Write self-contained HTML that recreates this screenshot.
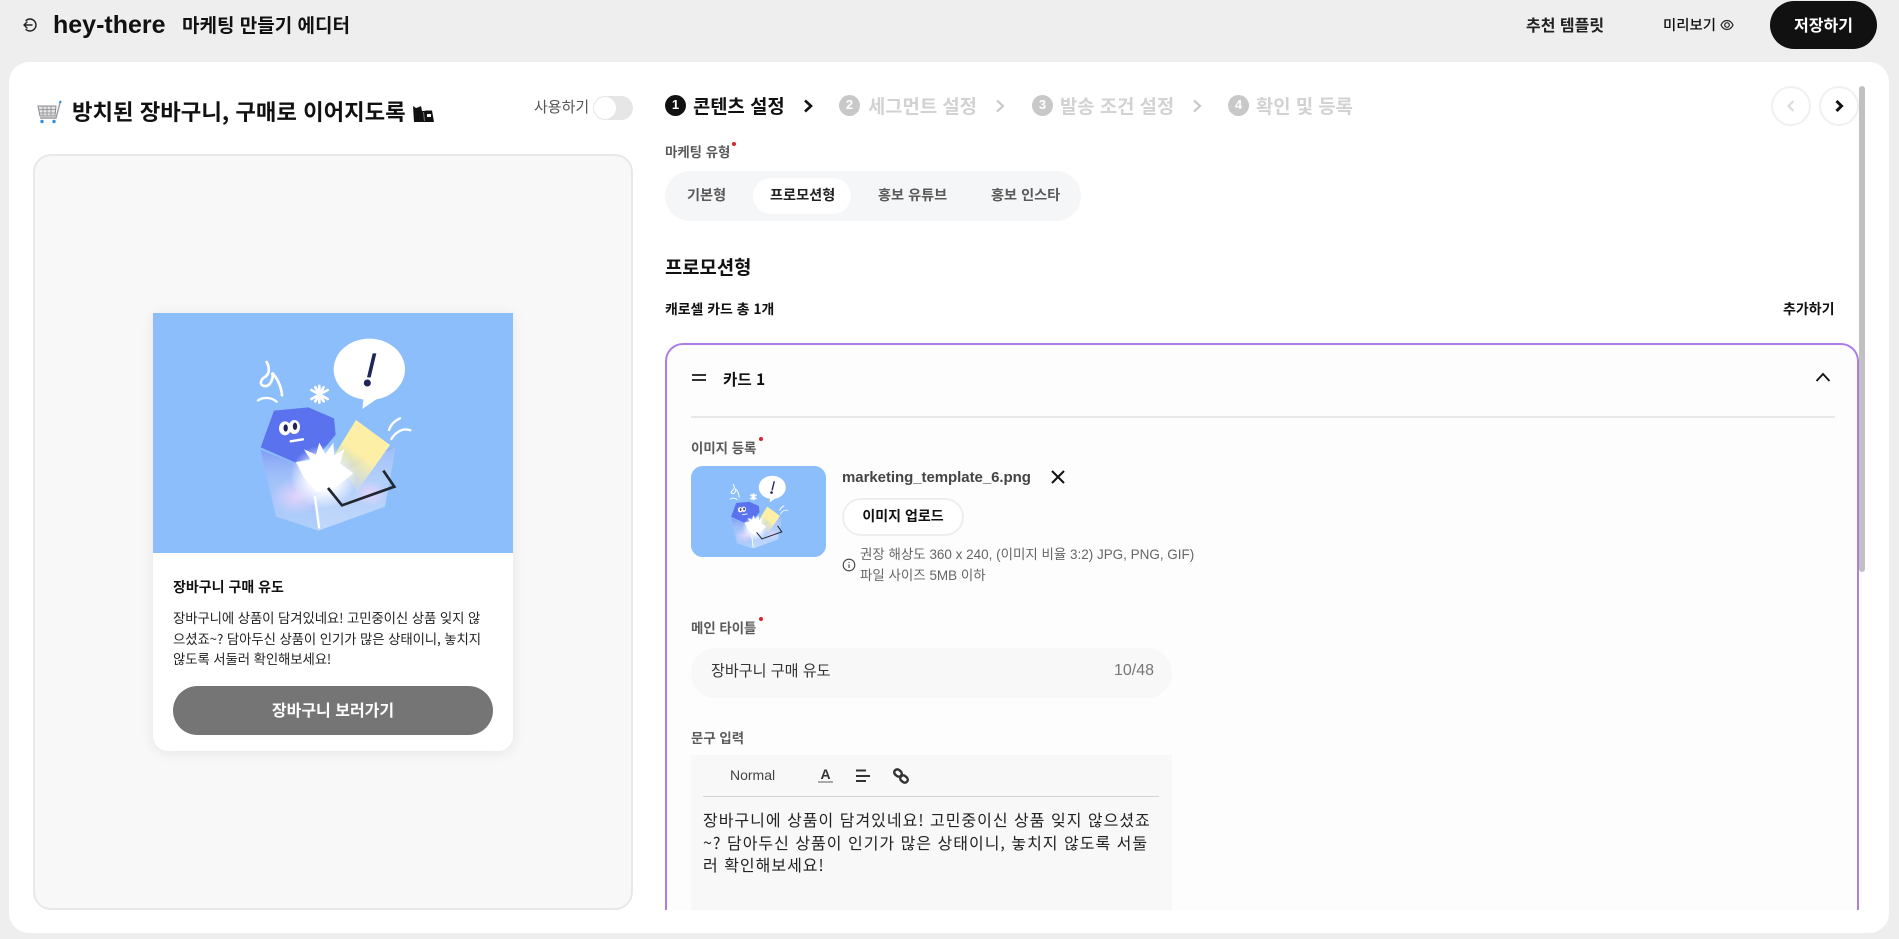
<!DOCTYPE html>
<html lang="ko">
<head>
<meta charset="utf-8">
<title>hey-there 마케팅 만들기 에디터</title>
<style>
html,body{margin:0;padding:0;width:1899px;height:939px;overflow:hidden;background:#eeeeee}
body{font-family:"Liberation Sans","Noto Sans CJK KR",sans-serif;color:#111;position:relative}
.a{position:absolute}
.t{position:absolute;white-space:nowrap;line-height:24px;height:24px}
.k{font-family:"Noto Sans CJK KR","Liberation Sans",sans-serif}
.b{font-weight:700}
.m{font-weight:500}
.star{position:absolute;width:4px;height:4px;border-radius:50%;background:#e0202e}
.pv{letter-spacing:-.1px}
svg{display:block}
</style>
</head>
<body>
<svg style="position:absolute;left:0;top:0" width="0" height="0">
  <defs>
    <radialGradient id="g1" cx=".5" cy=".5" r=".5"><stop offset="0" stop-color="#fff"/><stop offset=".45" stop-color="#fff" stop-opacity=".95"/><stop offset="1" stop-color="#fff" stop-opacity="0"/></radialGradient>
    <radialGradient id="g2" cx=".5" cy=".5" r=".5"><stop offset="0" stop-color="#e2d4fb"/><stop offset="1" stop-color="#e2d4fb" stop-opacity="0"/></radialGradient>
    <linearGradient id="g3" x1="0" y1="0" x2="0" y2="1"><stop offset="0" stop-color="#6d7ff0" stop-opacity=".6"/><stop offset=".4" stop-color="#c9c8f6" stop-opacity=".35"/><stop offset="1" stop-color="#cfe1fb" stop-opacity=".55"/></linearGradient>
    <linearGradient id="g4" x1="1" y1="0" x2="0" y2="1"><stop offset="0" stop-color="#b7d5fb" stop-opacity=".6"/><stop offset="1" stop-color="#cfdffb" stop-opacity=".55"/></linearGradient>
    <linearGradient id="g5" x1=".75" y1="0" x2=".25" y2="1"><stop offset="0" stop-color="#fdf0a6"/><stop offset=".5" stop-color="#fdf0a6"/><stop offset="1" stop-color="#fdf0a6" stop-opacity="0"/></linearGradient>
    <symbol id="art" viewBox="39 39 1080 720" preserveAspectRatio="xMidYMid slice">
      <rect x="39" y="39" width="1080" height="720" fill="#8bbefb"/>
      <path d="M380 186C390 205 388 222 376 230C360 240 358 255 372 258C392 262 402 232 396 218C410 232 424 258 426 286" fill="none" stroke="#fff" stroke-width="8" stroke-linecap="round"/>
      <path d="M354 301C372 290 394 292 410 305" fill="none" stroke="#fff" stroke-width="7" stroke-linecap="round"/>
      <g stroke="#fff" stroke-width="8" stroke-linecap="round">
        <path d="M538 258V308M514 270L563 297M514 297L563 270M526 262L551 304M551 262L526 304"/>
      </g>
      <ellipse cx="688" cy="208" rx="107" ry="92" fill="#fff"/>
      <path d="M672 285L667 327L712 296Z" fill="#fff"/>
      <path d="M698 160H709L692 232H681Z" fill="#1f2559"/>
      <circle cx="682" cy="249" r="10.500" fill="#1f2559"/>
      <path d="M780 355C765 362 752 374 747 390" fill="none" stroke="#fff" stroke-width="7" stroke-linecap="round"/>
      <path d="M811 391C790 383 768 394 754 417" fill="none" stroke="#fff" stroke-width="7" stroke-linecap="round"/>
      <path d="M402 332L505 322L582 355L587 404L532 470L465 487L362 442Z" fill="#5b72ef"/>
      <ellipse cx="435" cy="385" rx="18" ry="21" fill="#fff"/>
      <ellipse cx="463" cy="381" rx="17" ry="21" fill="#fff"/>
      <ellipse cx="437" cy="384" rx="6.500" ry="11" fill="#1f2559"/>
      <ellipse cx="465" cy="379" rx="6.500" ry="11" fill="#1f2559"/>
      <path d="M452 424L489 418" stroke="#fff" stroke-width="7" stroke-linecap="round"/>
      <path d="M362 450L408 650L535 692L735 620L768 440L640 490L465 490Z" fill="url(#g3)"/>
      <path d="M768 440L735 620L535 692L530 590L640 500Z" fill="url(#g4)"/>
      <ellipse cx="470" cy="590" rx="78" ry="58" fill="url(#g2)"/>
      <ellipse cx="690" cy="580" rx="48" ry="40" fill="url(#g2)"/>
      <path d="M648 360L750 435L650 575L585 462Z" fill="url(#g5)"/>
      <ellipse cx="550" cy="530" rx="100" ry="95" fill="url(#g1)"/>
      <path d="M468 486L512 480L492 448L528 464L538 428L556 462L580 428L583 466L614 446L600 490L640 520L590 560L530 575L490 530Z" fill="#fff"/>
      <path d="M525 590L537 682" stroke="#fff" stroke-width="7" stroke-linecap="round"/>
      <path d="M564 564L606 616L763 560L730 512" fill="none" stroke="#22262f" stroke-width="8" stroke-linejoin="miter"/>
    </symbol>
  </defs>
</svg>

<!-- HEADER -->
<svg class="a" style="left:21px;top:16px" width="18" height="18" viewBox="0 0 18 18" fill="none" stroke="#222" stroke-width="1.400" stroke-linecap="round" stroke-linejoin="round"><path d="M3 9H11M6 6L3 9L6 12"/><path d="M5 4.500A6 6 0 1 1 5 13.500"/></svg>
<div class="t b" style="left:53px;top:13px;font-size:25px">hey-there</div>
<div class="t k b" style="left:182px;top:13px;font-size:19px">마케팅 만들기 에디터</div>
<div class="t k b" style="left:1526px;top:12px;font-size:16px;color:#222">추천 템플릿</div>
<div class="t k m" style="left:1663px;top:13px;font-size:14.400px">미리보기</div>
<svg class="a" style="left:1720px;top:18px" width="14" height="14" viewBox="0 0 14 14" fill="none" stroke="#222" stroke-width="1.200"><path d="M1 7C2.500 3.800 4.500 2.500 7 2.500S11.500 3.800 13 7C11.500 10.200 9.500 11.500 7 11.500S2.500 10.200 1 7Z"/><circle cx="7" cy="7" r="2.300"/></svg>
<div class="a" style="left:1770px;top:1px;width:107px;height:48px;border-radius:24px;background:#111"></div>
<div class="t k b" style="left:1770px;width:107px;text-align:center;top:12px;font-size:16px;color:#fff">저장하기</div>

<!-- PANEL -->
<div class="a" style="left:9px;top:62px;width:1880px;height:871px;border-radius:20px;background:#fff"></div>

<!-- LEFT TITLE -->
<svg class="a" style="left:36px;top:100px" width="26" height="25" viewBox="0 0 26 25" fill="none"><path d="M2 6H20L19 16H4Z" fill="#e4e4e6" stroke="#8a8a8e" stroke-width="1"/><path d="M7 6V16M11 6V16M15 6V16M2.500 9.500H20M3 13H19.500" stroke="#8a8a8e" stroke-width=".800"/><path d="M4 18H20L24 3" stroke="#9a9a9e" stroke-width="1.400"/><path d="M23.500 3L25 1" stroke="#2f8fd8" stroke-width="2"/><circle cx="6" cy="21.500" r="1.700" fill="#2f8fd8"/><circle cx="18" cy="21.500" r="1.700" fill="#2f8fd8"/></svg>
<div class="t k b" style="left:72px;top:99px;font-size:22.300px;color:#111">방치된 장바구니, 구매로 이어지도록</div>
<svg class="a" style="left:412px;top:105px" width="23" height="18" viewBox="0 0 23 18"><path d="M1 1L4 3L7 2L9 1L10 6H12L14 5.500H20L22 17H4L2 17Z" fill="#111"/><path d="M15 9H19V12H15Z" fill="#fff"/><path d="M11.500 7L12.500 16" stroke="#777" stroke-width="1"/></svg>
<div class="t k" style="left:534px;top:95px;font-size:15px;color:#555">사용하기</div>
<div class="a" style="left:593px;top:96px;width:40px;height:24px;border-radius:12px;background:#e6e6e6"></div>
<div class="a" style="left:594px;top:97px;width:22px;height:22px;border-radius:50%;background:#fff"></div>

<!-- PREVIEW -->
<div class="a" style="left:33px;top:154px;width:596px;height:752px;border:2px solid #e8e8e8;border-radius:18px;background:#f8f8f8"></div>
<div class="a" style="left:153px;top:313px;width:360px;height:438px;background:#fff;border-radius:0 0 15px 15px;box-shadow:0 2px 14px rgba(0,0,0,.08)"></div>
<svg class="a" style="left:153px;top:313px" width="360" height="240" viewBox="39 39 1080 720"><use href="#art" x="39" y="39" width="1080" height="720"/></svg>
<div class="t k b" style="left:173px;top:575px;font-size:14px;color:#111">장바구니 구매 유도</div>
<div class="t k pv" style="left:173px;top:605px;font-size:13.400px;color:#222">장바구니에 상품이 담겨있네요! 고민중이신 상품 잊지 않</div>
<div class="t k pv" style="left:173px;top:626px;font-size:13.400px;color:#222">으셨죠~? 담아두신 상품이 인기가 많은 상태이니, 놓치지</div>
<div class="t k pv" style="left:173px;top:646px;font-size:13.400px;color:#222">않도록 서둘러 확인해보세요!</div>
<div class="a" style="left:173px;top:686px;width:320px;height:49px;border-radius:25px;background:#757575"></div>
<div class="t k b" style="left:173px;width:320px;text-align:center;top:697px;font-size:16px;color:#fff">장바구니 보러가기</div>

<!-- STEPS -->
<div class="a" style="left:665px;top:95px;width:21px;height:21px;border-radius:50%;background:#111"></div>
<div class="t b" style="left:665px;width:21px;text-align:center;top:93px;font-size:13px;color:#fff">1</div>
<div class="t k b" style="left:693px;top:94px;font-size:18.800px;color:#111">콘텐츠 설정</div>
<svg class="a" style="left:802px;top:99px" width="12" height="14" viewBox="0 0 12 14" fill="none" stroke="#111" stroke-width="2.600"><path d="M3 1.500L9 7L3 12.500"/></svg>

<div class="a" style="left:839px;top:95px;width:21px;height:21px;border-radius:50%;background:#c8c8c8"></div>
<div class="t b" style="left:839px;width:21px;text-align:center;top:93px;font-size:13px;color:#fff">2</div>
<div class="t k b" style="left:868px;top:94px;font-size:18.800px;color:#d2d2d2">세그먼트 설정</div>
<svg class="a" style="left:994px;top:99px" width="12" height="14" viewBox="0 0 12 14" fill="none" stroke="#c8c8c8" stroke-width="2.200"><path d="M3 1.500L9 7L3 12.500"/></svg>

<div class="a" style="left:1032px;top:95px;width:21px;height:21px;border-radius:50%;background:#c8c8c8"></div>
<div class="t b" style="left:1032px;width:21px;text-align:center;top:93px;font-size:13px;color:#fff">3</div>
<div class="t k b" style="left:1060px;top:94px;font-size:18.800px;color:#d2d2d2">발송 조건 설정</div>
<svg class="a" style="left:1191px;top:99px" width="12" height="14" viewBox="0 0 12 14" fill="none" stroke="#c8c8c8" stroke-width="2.200"><path d="M3 1.500L9 7L3 12.500"/></svg>

<div class="a" style="left:1228px;top:95px;width:21px;height:21px;border-radius:50%;background:#c8c8c8"></div>
<div class="t b" style="left:1228px;width:21px;text-align:center;top:93px;font-size:13px;color:#fff">4</div>
<div class="t k b" style="left:1256px;top:94px;font-size:18.800px;color:#d2d2d2">확인 및 등록</div>

<!-- NAV -->
<div class="a" style="left:1771px;top:86px;width:36px;height:36px;border:2px solid #f0f0f0;border-radius:50%;background:#fff"></div>
<svg class="a" style="left:1785px;top:99px" width="12" height="14" viewBox="0 0 12 14" fill="none" stroke="#dcdcdc" stroke-width="2.200"><path d="M8.500 2L3.500 7L8.500 12"/></svg>
<div class="a" style="left:1819px;top:86px;width:36px;height:36px;border:2px solid #f0f0f0;border-radius:50%;background:#fff"></div>
<svg class="a" style="left:1833px;top:99px" width="12" height="14" viewBox="0 0 12 14" fill="none" stroke="#111" stroke-width="3"><path d="M3.500 2L8.500 7L3.500 12"/></svg>
<div class="a" style="left:1859px;top:86px;width:6px;height:486px;border-radius:3px;background:#c1c1c1"></div>

<!-- MARKETING TYPE -->
<div class="t k b" style="left:665px;top:139px;font-size:13.400px;color:#5a5a5a">마케팅 유형</div>
<div class="star" style="left:732px;top:142px"></div>
<div class="a" style="left:665px;top:171px;width:416px;height:50px;border-radius:25px;background:#f5f6f7"></div>
<div class="a" style="left:753px;top:178px;width:98px;height:36px;border-radius:18px;background:#fff"></div>
<div class="t k b" style="left:687px;top:183px;font-size:14.200px;color:#5a5a5a">기본형</div>
<div class="t k b" style="left:770px;top:183px;font-size:14.200px;color:#222">프로모션형</div>
<div class="t k b" style="left:878px;top:183px;font-size:14.200px;color:#5a5a5a">홍보 유튜브</div>
<div class="t k b" style="left:991px;top:183px;font-size:14.200px;color:#5a5a5a">홍보 인스타</div>

<div class="t k b" style="left:665px;top:255px;font-size:18.800px;color:#111">프로모션형</div>
<div class="t k b" style="left:665px;top:297px;font-size:13.900px;color:#111">캐로셀 카드 총 1개</div>
<div class="t k b" style="left:1783px;top:297px;font-size:14px;color:#111">추가하기</div>

<!-- CARD -->
<div class="a" style="left:665px;top:343px;width:1190px;height:565px;border:2px solid #ad7de6;border-bottom:none;border-radius:18px 18px 0 0;background:#fdfdfd"></div>
<svg class="a" style="left:691px;top:372px" width="16" height="12" viewBox="0 0 16 12" stroke="#333" stroke-width="2"><path d="M1 3H15M1 8H15"/></svg>
<div class="t k b" style="left:723px;top:367px;font-size:15.600px;color:#111">카드 1</div>
<svg class="a" style="left:1815px;top:371px" width="16" height="12" viewBox="0 0 16 12" fill="none" stroke="#111" stroke-width="1.800"><path d="M1.500 10L8 3L14.500 10"/></svg>
<div class="a" style="left:691px;top:416px;width:1144px;height:2px;background:#e8e8e8"></div>

<!-- IMAGE -->
<div class="t k b" style="left:691px;top:435px;font-size:13.400px;color:#5a5a5a">이미지 등록</div>
<div class="star" style="left:759px;top:437px"></div>
<div class="a" style="left:691px;top:466px;width:135px;height:91px;border-radius:12px;overflow:hidden;background:#8bbefb">
  <svg width="135" height="91" viewBox="39 39 1080 720" preserveAspectRatio="xMidYMid slice"><use href="#art" x="39" y="39" width="1080" height="720"/></svg>
</div>
<div class="t b" style="left:842px;top:466px;font-size:15px;color:#444;letter-spacing:-.05px">marketing_template_6.png</div>
<svg class="a" style="left:1050px;top:469px" width="16" height="16" viewBox="0 0 16 16" stroke="#111" stroke-width="2"><path d="M2 2L14 14M14 2L2 14"/></svg>
<div class="a" style="left:842px;top:498px;width:118px;height:34px;border:2px solid #eeeeee;border-radius:19px;background:#fff"></div>
<div class="t k b" style="left:842px;width:122px;text-align:center;top:504px;font-size:14px;color:#111">이미지 업로드</div>
<svg class="a" style="left:842px;top:558px" width="14" height="14" viewBox="0 0 14 14" fill="none" stroke="#444" stroke-width="1.100"><circle cx="7" cy="7" r="5.800"/><path d="M7 6.200V10M7 4V4.900"/></svg>
<div class="t" style="left:860px;top:543px;font-size:13.470px;color:#666">권장 해상도 360 x 240, (이미지 비율 3:2) JPG, PNG, GIF)</div>
<div class="t" style="left:860px;top:564px;font-size:13.470px;color:#666">파일 사이즈 5MB 이하</div>

<!-- MAIN TITLE -->
<div class="t k b" style="left:691px;top:615px;font-size:13.400px;color:#5a5a5a">메인 타이틀</div>
<div class="star" style="left:759px;top:617px"></div>
<div class="a" style="left:691px;top:648px;width:481px;height:50px;border-radius:25px;background:#f8f8f8"></div>
<div class="t k" style="left:711px;top:658px;font-size:15.100px;color:#333">장바구니 구매 유도</div>
<div class="t" style="left:1114px;top:659px;font-size:16px;color:#777">10/48</div>

<!-- EDITOR -->
<div class="t k b" style="left:691px;top:725px;font-size:13.400px;color:#5a5a5a">문구 입력</div>
<div class="a" style="left:691px;top:755px;width:481px;height:155px;background:#f8f8f8"></div>
<div class="t" style="left:730px;top:763px;font-size:14px;color:#444">Normal</div>
<div class="t b" style="left:818px;top:762px;width:15px;text-align:center;font-size:14px;color:#333">A</div>
<div class="a" style="left:818px;top:781px;width:15px;height:2px;background:#aaa"></div>
<svg class="a" style="left:855px;top:768px" width="16" height="16" viewBox="0 0 16 16" stroke="#333" stroke-width="2"><path d="M1 2.500H11M1 8H15M1 13H11"/></svg>
<svg class="a" style="left:893px;top:768px" width="16" height="16" viewBox="0 0 16 16" fill="none" stroke="#333" stroke-width="2.400"><rect x="1" y="2" width="8" height="6" rx="3" transform="rotate(40 5 5)"/><rect x="7" y="8" width="8" height="6" rx="3" transform="rotate(40 11 11)"/></svg>
<div class="a" style="left:703px;top:796px;width:456px;height:1px;background:#d4d4d4"></div>
<div class="t k" style="left:703px;top:807px;font-size:16px;color:#222;letter-spacing:1px">장바구니에 상품이 담겨있네요! 고민중이신 상품 잊지 않으셨죠</div>
<div class="t k" style="left:703px;top:830px;font-size:16px;color:#222;letter-spacing:1px">~? 담아두신 상품이 인기가 많은 상태이니, 놓치지 않도록 서둘</div>
<div class="t k" style="left:703px;top:852px;font-size:16px;color:#222;letter-spacing:1px">러 확인해보세요!</div>
</body>
</html>
